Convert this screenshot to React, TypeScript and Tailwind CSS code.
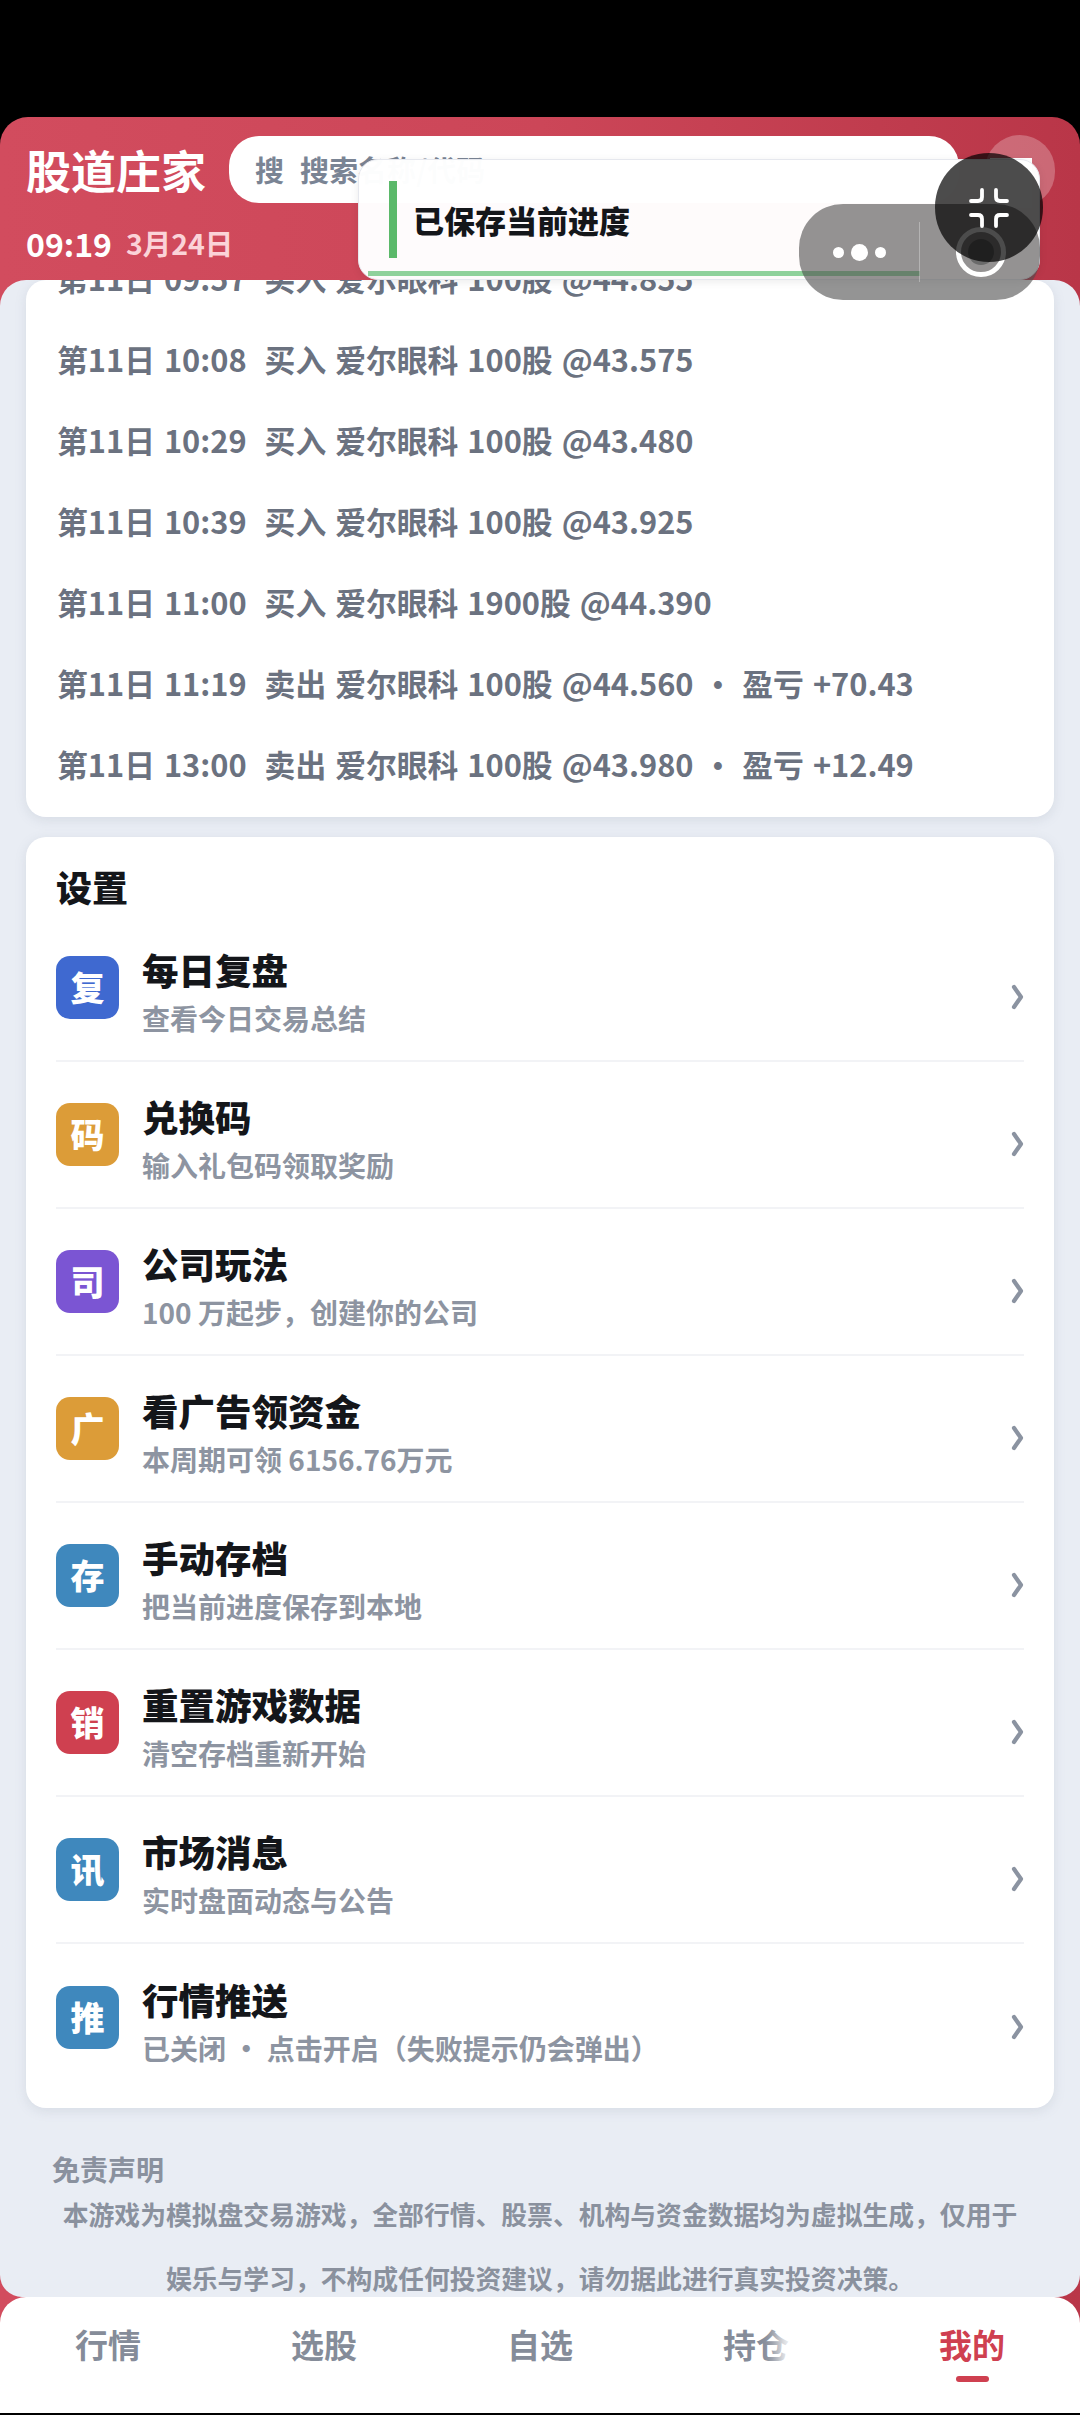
const trades = [
  '第11日 09:57  买入 爱尔眼科 100股 @44.855',
  '第11日 10:08  买入 爱尔眼科 100股 @43.575',
  '第11日 10:29  买入 爱尔眼科 100股 @43.480',
  '第11日 10:39  买入 爱尔眼科 100股 @43.925',
  '第11日 11:00  买入 爱尔眼科 1900股 @44.390',
  '第11日 11:19  卖出 爱尔眼科 100股 @44.560 • 盈亏 +70.43',
  '第11日 13:00  卖出 爱尔眼科 100股 @43.980 • 盈亏 +12.49',
];

const settings = [
  { icon: '复', color: 'bg-[#3f69d0]', title: '每日复盘', sub: '查看今日交易总结' },
  { icon: '码', color: 'bg-[#dc9c38]', title: '兑换码', sub: '输入礼包码领取奖励' },
  { icon: '司', color: 'bg-[#7b55d3]', title: '公司玩法', sub: '100 万起步\uff0c创建你的公司' },
  { icon: '广', color: 'bg-[#dc9c38]', title: '看广告领资金', sub: '本周期可领 6156.76万元' },
  { icon: '存', color: 'bg-[#3f88bd]', title: '手动存档', sub: '把当前进度保存到本地' },
  { icon: '销', color: 'bg-[#cf4050]', title: '重置游戏数据', sub: '清空存档重新开始' },
  { icon: '讯', color: 'bg-[#3f88bd]', title: '市场消息', sub: '实时盘面动态与公告' },
  { icon: '推', color: 'bg-[#3f88bd]', title: '行情推送', sub: '已关闭 • 点击开启\uff08失败提示仍会弹出\uff09' },
];

const tabs = ['行情', '选股', '自选', '持仓', '我的'];

function Chevron() {
  return (
    <svg width="13" height="26" viewBox="0 0 13 26" fill="none" className="shrink-0">
      <path d="M3 3 L10 13 L3 23" stroke="#8b93a1" strokeWidth="4.2" strokeLinecap="round" strokeLinejoin="round" />
    </svg>
  );
}

function SettingRow({ item, last }: { item: (typeof settings)[number]; last: boolean }) {
  return (
    <div className={`flex items-center h-[147px] pt-[18px] ${last ? '' : 'border-b-2 border-[#f2f3f6]'}`}>
      <div className={`w-[63px] h-[63px] mb-[18px] pb-[3px] shrink-0 rounded-[14px] flex items-center justify-center text-[34px] font-black text-white ${item.color}`}>
        {item.icon}
      </div>
      <div className="ml-[23px] flex-1 mb-[11px]">
        <div className="text-[36.5px] leading-[48px] font-black text-[#14161a]">{item.title}</div>
        <div className="mt-[5px] text-[28px] leading-[38px] font-bold text-[#8d94a1]">{item.sub}</div>
      </div>
      <Chevron />
    </div>
  );
}

export default function App() {
  return (
    <div className="relative w-[1080px] h-[2415px] overflow-hidden bg-black pt-[117px] font-['Noto_Sans_CJK_SC',sans-serif]">
      <div className="h-[2296px] flex flex-col rounded-t-[28px] overflow-hidden bg-gradient-to-r from-[#d24c5e] via-[#cc4658] to-[#b93648]">
        <header className="h-[163px] shrink-0 px-[26px] pt-[19px] text-white">
          <div className="flex items-center">
            <h1 className="text-[45px] leading-[67px] font-bold">股道庄家</h1>
            <div className="ml-[23px] w-[730px] h-[67px] rounded-[30px] bg-white flex items-center pl-[26px] text-[29px] font-bold text-[#7a8494]">
              <span>搜</span>
              <span className="ml-[16px]">搜索名称/代码</span>
            </div>
          </div>
          <div className="mt-[20px] flex items-center leading-[40px]">
            <span className="text-[32px] font-bold">09:19</span>
            <span className="ml-[14px] text-[28.5px] font-bold text-[#fbd3d8]">3月24日</span>
          </div>
        </header>

        <main className="flex-1 min-h-0 overflow-hidden rounded-t-[26px] rounded-b-[22px] bg-[#e9edf4] px-[26px]">
          <section className="rounded-[20px] bg-white shadow-[0_3px_12px_rgba(120,130,150,0.16)] overflow-hidden h-[537px] px-[31px]">
            <div className="mt-[-42px]">
              {trades.map((t) => (
                <div key={t} className="h-[81px] flex items-center text-[30.8px] [word-spacing:2px] font-bold text-[#6b7280] whitespace-pre">
                  {t}
                </div>
              ))}
            </div>
          </section>

          <section className="mt-[20px] rounded-[20px] bg-white shadow-[0_3px_12px_rgba(120,130,150,0.16)] h-[1271px] px-[30px] pt-[27px]">
            <h2 className="text-[36px] leading-[44px] font-black text-[#14161a]">设置</h2>
            <div className="mt-[7px]">
              {settings.map((s, i) => (
                <SettingRow key={s.title} item={s} last={i === settings.length - 1} />
              ))}
            </div>
          </section>

          <section className="mt-[43px] text-[#8a919e] font-bold">
            <h3 className="ml-[26px] text-[28px] leading-[36px]">免责声明</h3>
            <p className="mt-[-5px] text-center text-[25.8px] leading-[64px]">
              {'本游戏为模拟盘交易游戏\uff0c全部行情、股票、机构与资金数据均为虚拟生成\uff0c仅用于'}
              <br />
              {'娱乐与学习\uff0c不构成任何投资建议\uff0c请勿据此进行真实投资决策。'}
            </p>
          </section>
        </main>

        <nav className="relative h-[116px] shrink-0 rounded-t-[26px] bg-white grid grid-cols-5 text-[33px] font-bold text-[#858c99]">
          {tabs.map((tab, i) => (
            <div key={tab} className={`relative flex justify-center pt-[22px] leading-[50px] ${i === 4 ? 'text-[#cf4050]' : ''}`}>
              {tab}
              {i === 4 && <span className="absolute top-[79px] left-[92px] w-[33px] h-[6px] rounded-full bg-[#cf4050]" />}
            </div>
          ))}
          <div className="absolute left-[778px] top-[20px] w-[135px] h-[70px] bg-white/90 blur-[8px]" />
        </nav>
      </div>

      {/* system overlays on top of the app */}
      <div className="absolute left-[985px] top-[135px] w-[70px] h-[72px] rounded-full bg-white/25" />
      <div className="absolute left-[990px] top-[158px] w-[42px] h-[50px] bg-white" />

      <div className="absolute left-[358px] top-[159px] w-[682px] h-[121px] rounded-[20px] bg-white/98 border border-[#e6e8ee] shadow-[0_2px_8px_rgba(0,0,0,0.08)] overflow-hidden">
        <div className="absolute left-[30px] top-[21px] w-[8px] h-[77px] bg-[#5bb96a]" />
        <div className="absolute left-[54px] top-[38px] text-[31px] leading-[44px] font-black text-[#14161a]">已保存当前进度</div>
        <div className="absolute left-[9px] top-[111px] w-[552px] h-[5px] bg-[#8fd19b]" />
      </div>

      <div className="absolute left-[799px] top-[204px] w-[241px] h-[96px] rounded-[44px] bg-[#4d4d4d]/60 flex items-center">
        <div className="w-[120px] flex items-center justify-center gap-[7px]">
          <span className="w-[11px] h-[11px] rounded-full bg-white" />
          <span className="w-[17px] h-[17px] rounded-full bg-white" />
          <span className="w-[11px] h-[11px] rounded-full bg-white" />
        </div>
        <div className="w-px h-[60px] bg-white/30" />
        <div className="ml-[36px] w-[50px] h-[50px] rounded-full border-[5px] border-white flex items-center justify-center">
          <span className="w-[26px] h-[26px] rounded-full bg-[#6a6a6a]" />
        </div>
      </div>

      <div className="absolute left-[935px] top-[153px] w-[108px] h-[109px] rounded-full bg-black/70 flex items-center justify-center">
        <svg width="40" height="40" viewBox="0 0 40 40" fill="none" stroke="white" strokeWidth="3.8" strokeLinecap="round" strokeLinejoin="round">
          <path d="M13 2 V9 Q13 13 9 13 H2" />
          <path d="M27 2 V9 Q27 13 31 13 H38" />
          <path d="M13 38 V31 Q13 27 9 27 H2" />
          <path d="M27 38 V31 Q27 27 31 27 H38" />
        </svg>
      </div>
    </div>
  );
}
